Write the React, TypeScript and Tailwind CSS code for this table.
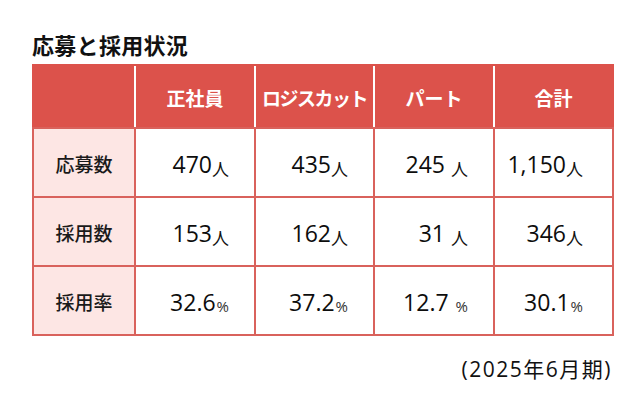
const font = "font-['Open_Sans','Noto_Sans_CJK_JP',sans-serif]";

const headers = [
  { text: "正社員", cls: "" },
  { text: "ロジスカット", cls: "tracking-[-1.5px]" },
  { text: "パート", cls: "" },
  { text: "合計", cls: "" },
];

const rows = [
  { label: "応募数", unit: "人", values: ["470", "435", "245 ", "1,150"] },
  { label: "採用数", unit: "人", values: ["153", "162", "31 ", "346"] },
  { label: "採用率", unit: "%", values: ["32.6", "37.2", "12.7 ", "30.1"] },
];

const cols = "grid-cols-[100px_118px_117px_118px_117px]";

export default function App() {
  return (
    <div className={`w-[640px] h-[410px] bg-white px-[32px] pt-[32px] ${font} text-[#111]`}>
      <h1 className="text-[22px] font-bold leading-[27px] tracking-[0.3px] text-[#111]">
        応募と採用状況
      </h1>

      <div className="mt-[5px] w-[582px]">
        {/* header row */}
        <div
          className={`grid ${cols} gap-x-[2px] bg-white border-2 border-b-0 border-[#dc524b]`}
        >
          <div className="h-[61px] bg-[#dc524b]" />
          {headers.map((h) => (
            <div
              key={h.text}
              className={`h-[61px] bg-[#dc524b] flex items-center justify-center pt-[6px] text-[19px] font-bold text-white whitespace-nowrap ${h.cls}`}
            >
              {h.text}
            </div>
          ))}
        </div>

        {/* body rows */}
        <div
          className={`grid ${cols} gap-[2px] bg-[#d9625c] border-2 border-[#d9625c] auto-rows-[67px]`}
        >
          {rows.map((r) => (
            <Row key={r.label} label={r.label} unit={r.unit} values={r.values} />
          ))}
        </div>
      </div>

      <div className="mt-[21px] w-[580px] text-right text-[21px] leading-[24px] tracking-[1.5px] text-[#111]">
        (2025年6月期)
      </div>
    </div>
  );
}

function Row({
  label,
  unit,
  values,
}: {
  label: string;
  unit: string;
  values: string[];
}) {
  return (
    <>
      <div className="bg-[#fde6e4] flex items-center justify-center pt-[6px] text-[19px] font-medium text-[#1a1a1a]">
        {label}
      </div>
      {values.map((v, i) => (
        <div
          key={i}
          className={`bg-white flex items-center justify-end pt-[4px] whitespace-pre ${
            i === 3 ? "pr-[29px]" : "pr-[25px]"
          }`}
        >
          <span className="text-[23px] leading-none text-[#0d0d0d]">{v}</span>
          {unit === "人" ? (
            <span className="text-[17px] leading-none relative top-[5px]">人</span>
          ) : (
            <span className="text-[15px] leading-none relative top-[4px] ml-[1px] text-[#333]">%</span>
          )}
        </div>
      ))}
    </>
  );
}
